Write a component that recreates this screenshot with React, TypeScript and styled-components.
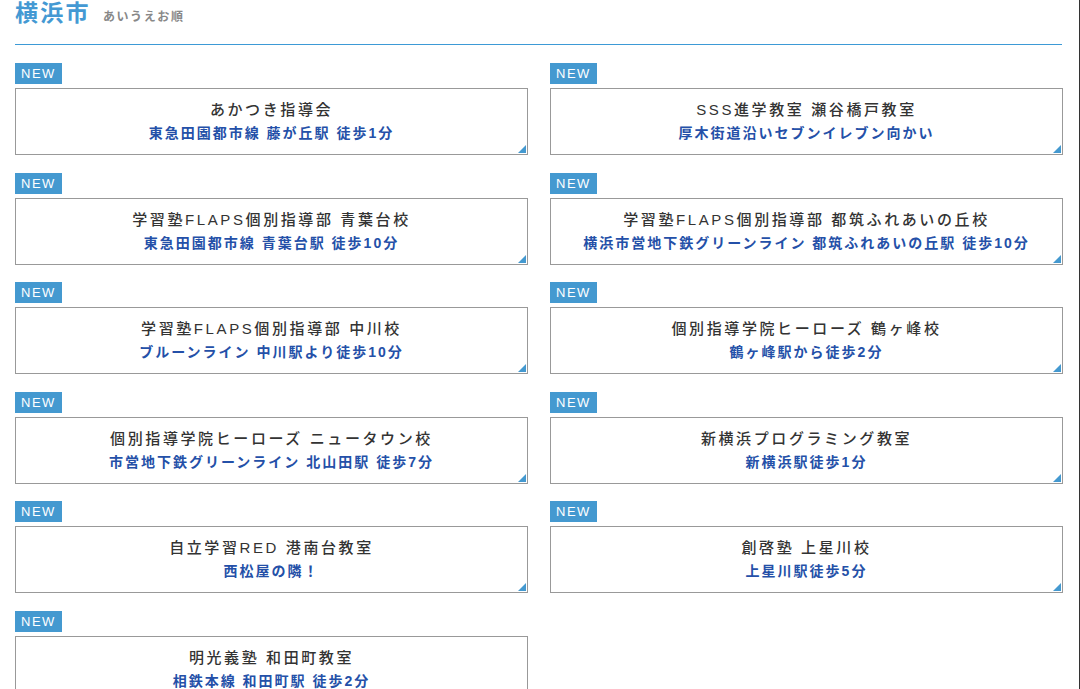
import React from "react";
import styled, { createGlobalStyle } from "styled-components";

const Global = createGlobalStyle`
  html, body { margin: 0; padding: 0; background: #fff; }
  body { font-family: "Liberation Sans", "Noto Sans CJK JP", sans-serif; }
  * { box-sizing: border-box; }
`;

const Page = styled.div`
  width: 1080px;
  min-height: 689px;
  padding: 0 17px 0 15px;
  border-right: 1px solid #333;
`;

const Header = styled.div`
  display: flex;
  align-items: baseline;
  gap: 12px;
  height: 45px;
  border-bottom: 1px solid #3d9ad6;
`;

const Title = styled.h1`
  margin: -4px 0 0;
  font-family: "Noto Sans CJK JP", sans-serif;
  font-size: 23px;
  line-height: 30px;
  font-weight: 700;
  color: #4499d3;
  letter-spacing: 2.3px;
`;

const Sub = styled.span`
  font-family: "Noto Sans CJK JP", sans-serif;
  font-size: 12px;
  color: #888;
  font-weight: 700;
  letter-spacing: 1.6px;
`;

const Grid = styled.div`
  display: grid;
  grid-template-columns: 513px 513px;
  column-gap: 22px;
  row-gap: 17.6px;
  padding-top: 18px;
`;

const Item = styled.div`
  display: flex;
  flex-direction: column;
  align-items: flex-start;
  gap: 4px;
`;

const Badge = styled.span`
  display: inline-block;
  background: #4499d0;
  color: #fff;
  font-family: "Liberation Sans", Arial, sans-serif;
  font-size: 13px;
  line-height: 21px;
  height: 21px;
  padding: 0 6px;
  letter-spacing: 1.5px;
`;

const Card = styled.a`
  position: relative;
  display: flex;
  flex-direction: column;
  align-items: center;
  width: 100%;
  height: 67px;
  border: 1px solid #999;
  padding-top: 10px;
  text-decoration: none;
  &::after {
    content: "";
    position: absolute;
    right: 1px;
    bottom: 1px;
    width: 0;
    height: 0;
    border-style: solid;
    border-width: 0 0 8px 8px;
    border-color: transparent transparent #4499d0 transparent;
  }
`;

const Name = styled.div`
  font-size: 15px;
  line-height: 22px;
  color: #333;
  font-weight: 500;
  letter-spacing: 2.6px;
`;

const Access = styled.div`
  margin-top: 3px;
  font-size: 14px;
  line-height: 19px;
  color: #2450a8;
  font-weight: 700;
  letter-spacing: 2px;
`;

const items: [string, string][] = [
  ["あかつき指導会", "東急田園都市線 藤が丘駅 徒歩1分"],
  ["SSS進学教室 瀬谷橋戸教室", "厚木街道沿いセブンイレブン向かい"],
  ["学習塾FLAPS個別指導部 青葉台校", "東急田園都市線 青葉台駅 徒歩10分"],
  ["学習塾FLAPS個別指導部 都筑ふれあいの丘校", "横浜市営地下鉄グリーンライン 都筑ふれあいの丘駅 徒歩10分"],
  ["学習塾FLAPS個別指導部 中川校", "ブルーンライン 中川駅より徒歩10分"],
  ["個別指導学院ヒーローズ 鶴ヶ峰校", "鶴ヶ峰駅から徒歩2分"],
  ["個別指導学院ヒーローズ ニュータウン校", "市営地下鉄グリーンライン 北山田駅 徒歩7分"],
  ["新横浜プログラミング教室", "新横浜駅徒歩1分"],
  ["自立学習RED 港南台教室", "西松屋の隣！"],
  ["創啓塾 上星川校", "上星川駅徒歩5分"],
  ["明光義塾 和田町教室", "相鉄本線 和田町駅 徒歩2分"],
];

export default function App() {
  return (
    <Page>
      <Global />
      <Header>
        <Title>横浜市</Title>
        <Sub>あいうえお順</Sub>
      </Header>
      <Grid>
        {items.map(([n, a], i) => (
          <Item key={i}>
            <Badge>NEW</Badge>
            <Card href="#">
              <Name>{n}</Name>
              <Access>{a}</Access>
            </Card>
          </Item>
        ))}
      </Grid>
    </Page>
  );
}
